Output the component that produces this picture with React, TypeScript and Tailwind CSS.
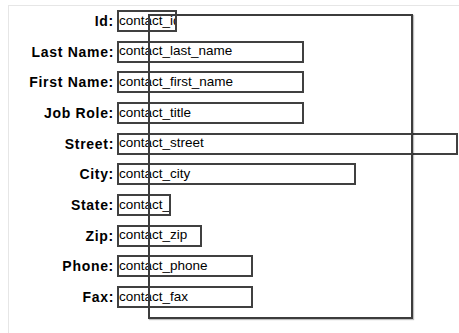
import React from "react";

const rows: { label: string; value: string; w: number }[] = [
  { label: "Id:", value: "contact_id", w: 60 },
  { label: "Last Name:", value: "contact_last_name", w: 187 },
  { label: "First Name:", value: "contact_first_name", w: 187 },
  { label: "Job Role:", value: "contact_title", w: 187 },
  { label: "Street:", value: "contact_street", w: 341 },
  { label: "City:", value: "contact_city", w: 239 },
  { label: "State:", value: "contact_state", w: 54 },
  { label: "Zip:", value: "contact_zip", w: 85 },
  { label: "Phone:", value: "contact_phone", w: 136 },
  { label: "Fax:", value: "contact_fax", w: 136 },
];

export default function App() {
  return (
    <div
      className="relative w-[459px] h-[333px] bg-white overflow-hidden"
      style={{ fontFamily: '"Liberation Sans", Arial, sans-serif' }}
    >
      <div className="ml-[8px] mt-[5px] h-[328px] border-l border-t border-[#e6e6e6] pt-[4px]">
        <div className="flex flex-col gap-[8.67px]">
          {rows.map((r) => (
            <div key={r.label} className="flex items-center h-[22px]">
              <div className="w-[105px] text-right text-[14px] font-bold tracking-[0.7px] text-black leading-none">
                {r.label}
              </div>
              <div
                className="ml-[3px] h-[22px] border-2 border-[#404040] flex items-center overflow-hidden whitespace-nowrap text-[13.5px] text-black leading-none"
                style={{ width: r.w }}
              >
                <span className="-mt-[1px]">{r.value}</span>
              </div>
            </div>
          ))}
        </div>
      </div>
      <div className="absolute left-[148px] top-[14px] w-[265px] h-[305px] border-2 border-[#3c3c3c] shadow-[1px_1px_1px_rgba(0,0,0,0.25)] pointer-events-none" />
    </div>
  );
}
